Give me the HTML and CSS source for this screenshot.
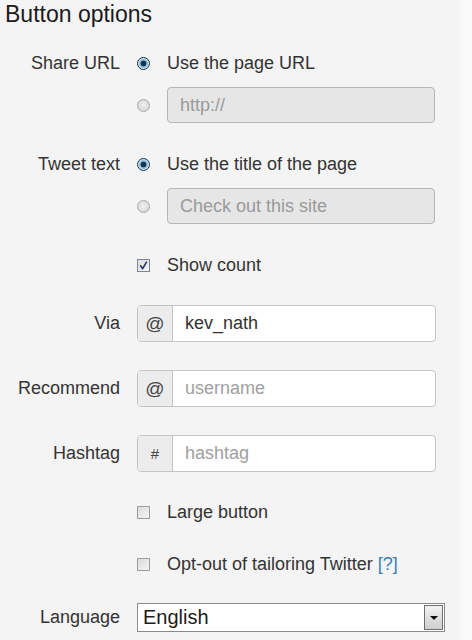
FILE: index.html
```html
<!DOCTYPE html>
<html>
<head>
<meta charset="utf-8">
<link rel="stylesheet" href="styles.css">
</head>
<body>
<div class="page">
  <h2 class="title">Button options</h2>
  <div class="form">
    <div class="row r-share">
      <span class="label">Share URL</span>
      <label class="opt"><span class="radio checked"></span><span>Use the page URL</span></label>
    </div>
    <div class="row r-tight">
      <span class="label"></span>
      <div class="opt"><span class="radio"></span><span class="input disabled">http://</span></div>
    </div>
    <div class="row r-group">
      <span class="label">Tweet text</span>
      <label class="opt"><span class="radio checked"></span><span>Use the title of the page</span></label>
    </div>
    <div class="row r-tight">
      <span class="label"></span>
      <div class="opt"><span class="radio"></span><span class="input disabled">Check out this site</span></div>
    </div>
    <div class="row r-group">
      <span class="label"></span>
      <label class="opt check-opt"><span class="checkbox checked"><svg viewBox="0 0 13 13" width="13" height="13"><path d="M3.2 6.2 L5.6 9.6 L9.8 2.6" fill="none" stroke="#1f2f6a" stroke-width="1.6"/></svg></span><span>Show count</span></label>
    </div>
    <div class="row r-via">
      <span class="label">Via</span>
      <div class="igroup"><span class="addon">@</span><span class="ival">kev_nath</span></div>
    </div>
    <div class="row r-wide">
      <span class="label">Recommend</span>
      <div class="igroup"><span class="addon">@</span><span class="ival ph">username</span></div>
    </div>
    <div class="row r-wide">
      <span class="label">Hashtag</span>
      <div class="igroup"><span class="addon hash">#</span><span class="ival ph">hashtag</span></div>
    </div>
    <div class="row r-group">
      <span class="label"></span>
      <label class="opt check-opt"><span class="checkbox"></span><span>Large button</span></label>
    </div>
    <div class="row r-opt">
      <span class="label"></span>
      <label class="opt check-opt"><span class="checkbox"></span><span>Opt-out of tailoring Twitter <a class="help">[?]</a></span></label>
    </div>
    <div class="row r-lang">
      <span class="label">Language</span>
      <div class="select"><span class="sel-val">English</span><span class="sel-btn"><span class="arrow"></span></span></div>
    </div>
  </div>
</div>
</body>
</html>
```

FILE: styles.css
```css
html, body {
  margin: 0;
  padding: 0;
  background: #f5f5f5;
}
.page {
  width: 472px;
  height: 640px;
  overflow: hidden;
  font-family: "Liberation Sans", Arial, sans-serif;
  color: #333;
  background: linear-gradient(to right, #f4f4f4 0, #f4f4f4 456px, #f9f9f9 462px);
}
.title {
  margin: 0;
  padding: 1px 0 0 5px;
  height: 39px;
  font-size: 23px;
  font-weight: normal;
  color: #1a1a1a;
  line-height: 26px;
}
.form {
  display: flex;
  flex-direction: column;
}
.row {
  display: grid;
  grid-template-columns: 120px 299px;
  column-gap: 17px;
  align-items: center;
  height: 36px;
  font-size: 18px;
}
.r-share { margin-top: 5px; }
.r-tight { margin-top: 6px; }
.r-group { margin-top: 23px; }
.r-via { margin-top: 22px; }
.r-wide { margin-top: 29px; }
.r-opt { margin-top: 16px; }
.r-lang { margin-top: 21px; grid-template-columns: 120px 308px; height: 29px; }
.label {
  text-align: right;
  color: #333;
}
.opt {
  display: flex;
  align-items: center;
  gap: 17px;
  height: 36px;
}
.radio {
  flex: none;
  width: 13px;
  height: 13px;
  box-sizing: border-box;
  border-radius: 50%;
  border: 1px solid #a8a8a8;
  background: radial-gradient(circle at 50% 45%, #f0f0f0 0, #d8d8d8 75%);
}
.radio.checked {
  border: 1px solid #1e2f40;
  background: radial-gradient(circle, #17324a 0, #17324a 2.6px, #7fb6d6 3.2px, #a9d2ea 4.6px, #dfeef7 5.4px);
}
.input {
  flex: none;
  width: 268px;
  height: 36px;
  box-sizing: border-box;
  border: 1px solid #b6b6b6;
  border-radius: 4px;
  padding-left: 12px;
  display: flex;
  align-items: center;
  font-size: 18px;
}
.input.disabled {
  background: #e6e6e6;
  color: #9a9a9a;
}
.checkbox {
  flex: none;
  width: 13px;
  height: 13px;
  box-sizing: border-box;
  border: 1px solid #9c9c9c;
  background: linear-gradient(135deg, #dcdcdc, #f4f4f4);
  display: flex;
}
.checkbox.checked {
  border-color: #7a8499;
  background: linear-gradient(135deg, #dcdcdc, #f4f4f4);
}
.checkbox svg {
  margin: -1px;
}
.help {
  color: #3d7fb5;
}
.igroup {
  display: flex;
  height: 37px;
  box-sizing: border-box;
  border: 1px solid #c4c4c4;
  border-radius: 4px;
  background: #fff;
  overflow: hidden;
}
.addon {
  flex: none;
  width: 35px;
  box-sizing: border-box;
  background: #ececec;
  border-right: 1px solid #c4c4c4;
  display: flex;
  align-items: center;
  justify-content: center;
  color: #444;
  font-size: 19px;
}
.addon.hash {
  font-size: 15px;
}
.ival {
  display: flex;
  align-items: center;
  padding-left: 12px;
  color: #333;
}
.ival.ph {
  color: #a0a0a0;
}
.select {
  display: flex;
  height: 29px;
  box-sizing: border-box;
  border: 1px solid #8a8a8a;
  background: #fff;
}
.sel-val {
  flex: 1;
  padding-left: 5px;
  font-size: 20px;
  color: #1c1c1c;
  display: flex;
  align-items: center;
}
.sel-btn {
  flex: none;
  width: 19px;
  margin: 1px;
  box-sizing: border-box;
  border: 1px solid #6f6f6f;
  background: linear-gradient(#f2f2f2, #cfcfcf);
  display: flex;
  align-items: center;
  justify-content: center;
}
.arrow {
  width: 0;
  height: 0;
  border-left: 4px solid transparent;
  border-right: 4px solid transparent;
  border-top: 4px solid #111;
}
```
